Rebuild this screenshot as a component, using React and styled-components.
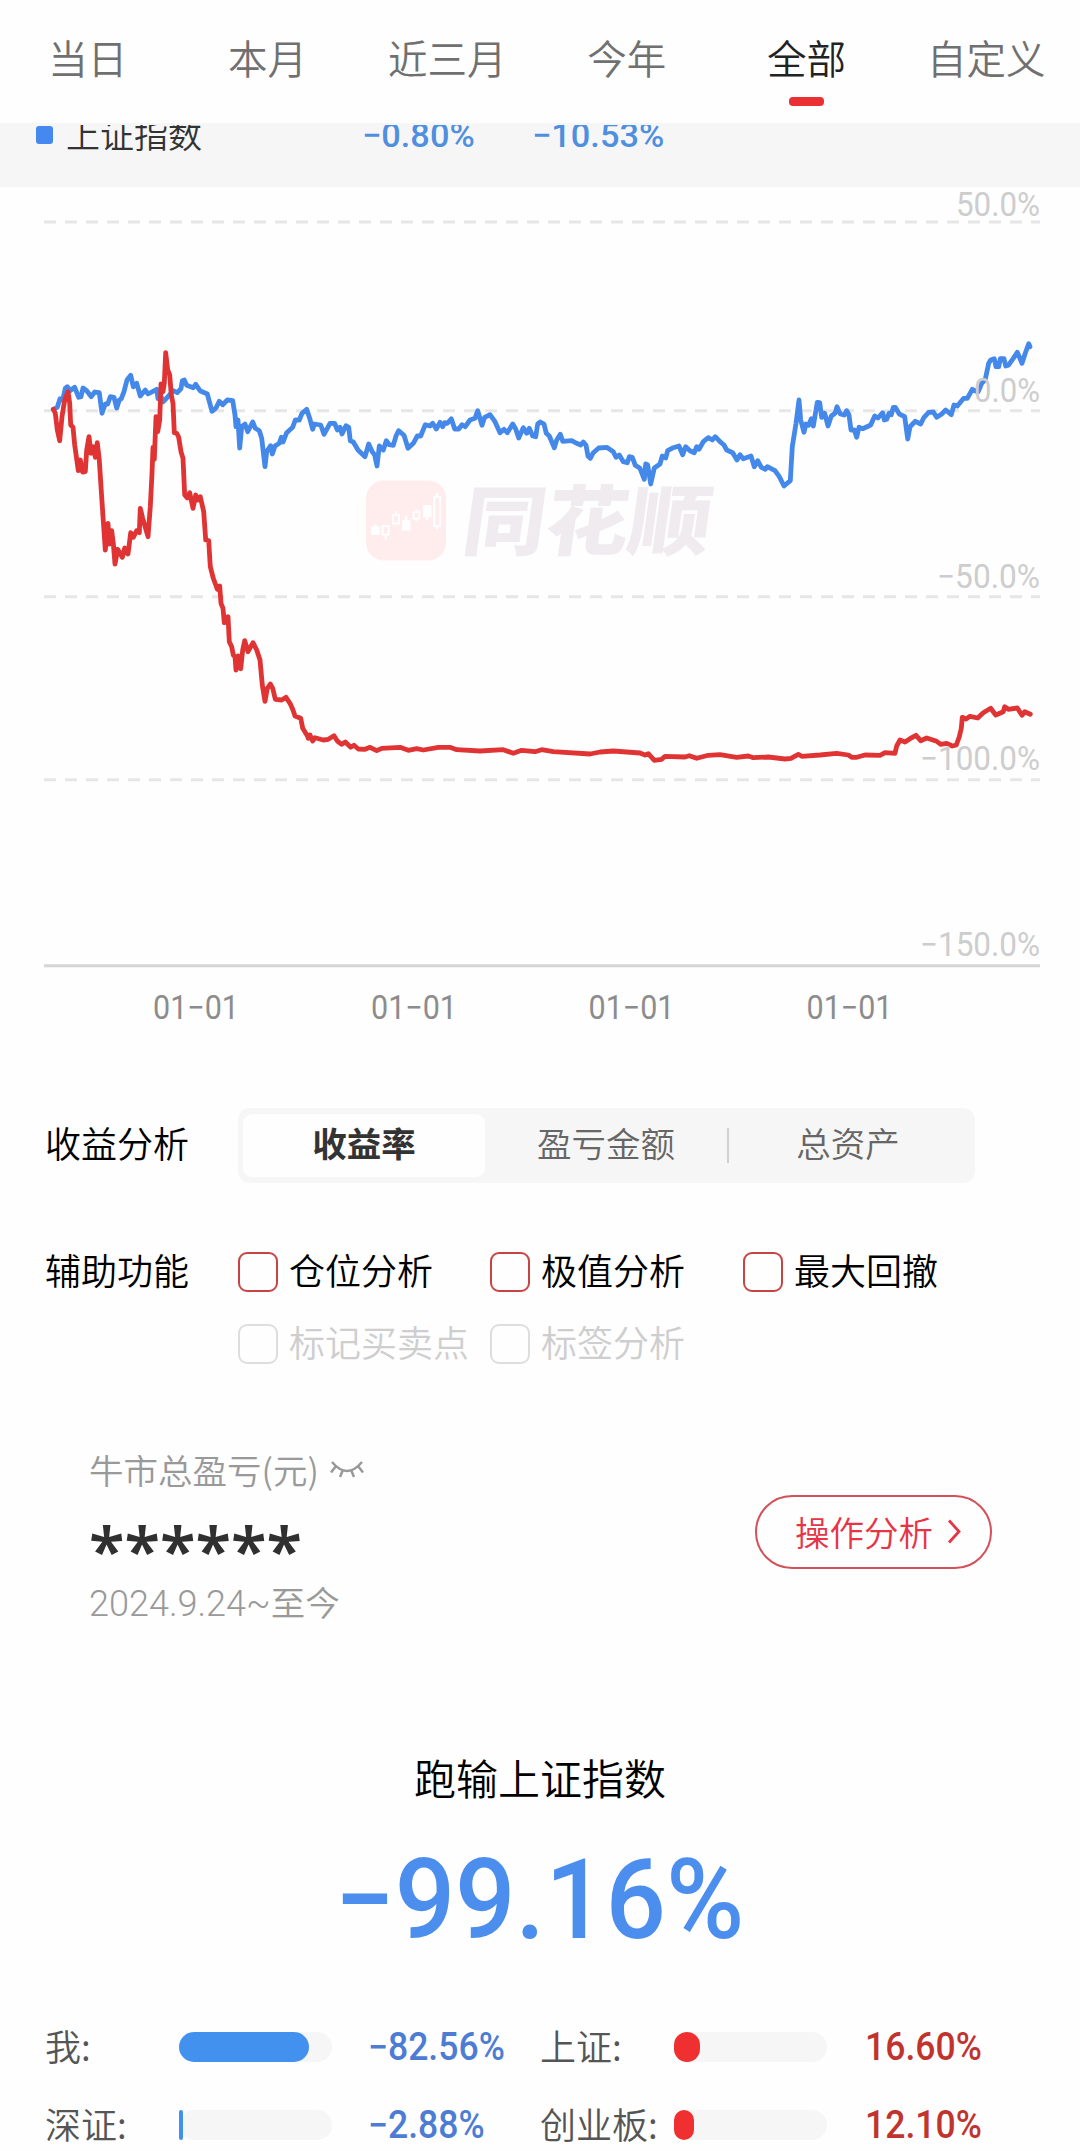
import React from "react";
import styled, { createGlobalStyle } from "styled-components";

const BLUE = "#4488ea";
const RED = "#e03434";

const GlobalStyle = createGlobalStyle`
  body {
    margin: 0;
    background: #fefefe;
    overflow: hidden;
  }
`;

const Page = styled.div`
  width: 1080px;
  height: 2151px;
  overflow: hidden;
  background: #fefefe;
  color: #000;
  font-family: "Noto Sans CJK SC", "Noto Sans", sans-serif;
  font-weight: 350;
  white-space: nowrap;
`;

const TabBar = styled.nav`
  display: grid;
  grid-template-columns: repeat(6, 1fr);
  width: 1078px;
  height: 123px;
  margin-left: -2px;
`;

const Tab = styled.div`
  display: flex;
  flex-direction: column;
  align-items: center;
  padding-top: 32px;
  font-size: 39.5px;
  line-height: 50px;
  color: ${props => (props.$active ? "#222" : "#707070")};
`;

const TabMark = styled.span`
  width: 35px;
  height: 9px;
  margin-top: 15px;
  border-radius: 4px;
  background: #eb3033;
`;

const LegendBar = styled.div`
  height: 62px;
  border-top: 2px solid #f6f6f7;
  background: #f6f6f7;
  overflow: hidden;
`;

const Legend = styled.div`
  display: grid;
  grid-template-columns: 30px 296px 170px auto;
  align-items: center;
  height: 40px;
  margin-top: -10px;
  padding-left: 36px;
  font-size: 34px;
  line-height: 40px;
  color: #333;
`;

const LegendSwatch = styled.span`
  width: 17px;
  height: 18px;
  border-radius: 3px;
  background: #4488f0;
`;

const LegendName = styled.span`
  margin-top: -3px;
`;

const Num = styled.span`
  display: inline-block;
  font-family: Roboto, sans-serif;
  font-weight: ${props => props.$weight || 400};
  font-size: ${props => props.$size}px;
  color: ${props => props.$color};
  transform: scaleX(${props => props.$stretch || 1});
  transform-origin: ${props => props.$origin || "left"};
`;

const ChartSvg = styled.svg`
  display: block;
  width: 1080px;
  height: 853px;
`;

const AxisText = styled.text`
  font-family: Roboto, sans-serif;
  font-weight: 400;
  font-size: 33px;
  fill: ${props => props.$color};
`;

const Brand = styled.text`
  font-family: "Noto Sans CJK SC", sans-serif;
  font-weight: 900;
  font-size: 76px;
  fill: #efebef;
`;

const Row = styled.div`
  display: flex;
  align-items: center;
  padding-left: 45px;
`;

const AnalysisRow = styled(Row)`
  margin-top: 68px;
  height: 75px;
`;

const RowLabel = styled.div`
  width: 193px;
  padding-bottom: 7px;
  font-size: 36px;
  line-height: 34px;
`;

const Segmented = styled.div`
  display: flex;
  align-items: center;
  box-sizing: border-box;
  width: 737px;
  height: 75px;
  padding-left: 5px;
  border-radius: 12px;
  background: #f6f6f6;
`;

const Segment = styled.div`
  display: flex;
  align-items: center;
  justify-content: center;
  box-sizing: border-box;
  width: 242px;
  height: 63px;
  padding-bottom: 7px;
  border-radius: 9px;
  font-size: 34.5px;
  font-weight: ${props => (props.$active ? 700 : 350)};
  color: ${props => (props.$active ? "#333" : "#666")};
  background: ${props => (props.$active ? "#fefefe" : "transparent")};
`;

const Divider = styled.span`
  width: 2px;
  height: 35px;
  margin: 0 -2px 0 0;
  background: #d0d0d0;
`;

const OptionsRow = styled(Row)`
  align-items: flex-start;
  margin-top: 69px;
`;

const Options = styled.div`
  display: grid;
  grid-template-columns: 252px 253px auto;
  row-gap: 32px;
`;

const Option = styled.div`
  display: flex;
  gap: 11px;
  height: 40px;
  font-size: 36px;
  line-height: 34px;
  color: ${props => (props.$disabled ? "#cecece" : "#000")};
`;

const CheckBox = styled.span`
  flex: none;
  box-sizing: border-box;
  width: 40px;
  height: 40px;
  border: 2px solid ${props => (props.$disabled ? "#dedede" : "#c84444")};
  border-radius: 9px;
`;

const ProfitCard = styled.section`
  display: flex;
  align-items: center;
  justify-content: space-between;
  margin-top: 85px;
  padding: 0 88px 0 89px;
  height: 176px;
`;

const ProfitInfo = styled.div`
  height: 176px;
  color: #999;
  font-size: 34.5px;
`;

const ProfitTitle = styled.div`
  display: flex;
  align-items: center;
  gap: 11px;
  height: 40px;
  line-height: 40px;
`;

const Masked = styled.div`
  height: 54px;
  margin-top: 28px;
  font-family: "Noto Sans", sans-serif;
  font-weight: 600;
  font-size: 65px;
  line-height: 64px;
  color: #303030;
`;

const ProfitDate = styled.div`
  margin-top: 10px;
  line-height: 40px;
`;

const PillButton = styled.button`
  display: flex;
  align-items: center;
  justify-content: center;
  gap: 14px;
  box-sizing: border-box;
  width: 237px;
  height: 74px;
  margin-top: -11px;
  padding: 0 0 2px 9px;
  border: 2px solid #d3505a;
  border-radius: 37px;
  background: transparent;
  font: inherit;
  font-size: 34.5px;
  color: #e73447;
`;

const Summary = styled.section`
  display: flex;
  flex-direction: column;
  align-items: center;
  margin-top: 127px;
`;

const SummaryTitle = styled.div`
  font-size: 42px;
  line-height: 50px;
`;

const SummaryValue = styled.div`
  margin-top: 33px;
  line-height: 130px;
`;

const Comparison = styled.div`
  display: grid;
  grid-template-columns: 495px auto;
  row-gap: 38px;
  margin-top: 31px;
  padding-left: 46px;
`;

const CompareItem = styled.div`
  display: grid;
  grid-template-columns: 133px ${props => (props.$wide ? "191px" : "189px")} auto;
  align-items: center;
  height: 40px;
  font-size: 36px;
  line-height: 40px;
  color: #555;
`;

const CompareLabel = styled.span`
  margin: -5px 0 0 -1px;
`;

const Track = styled.div`
  width: 153px;
  height: 30px;
  border-radius: 15px;
  background: #f6f6f6;
`;

const Fill = styled.div`
  height: 30px;
  border-radius: 15px;
  background: ${props => props.$color};
`;

const TABS = ["当日", "本月", "近三月", "今年", "全部", "自定义"];

const OPTIONS = [
  { label: "仓位分析" },
  { label: "极值分析" },
  { label: "最大回撤" },
  { label: "标记买卖点", disabled: true },
  { label: "标签分析", disabled: true }
];

const COMPARE = [
  { label: "我:", value: "−82.56%", width: 130, down: true },
  { label: "上证:", value: "16.60%", width: 26 },
  { label: "深证:", value: "−2.88%", width: 4, down: true },
  { label: "创业板:", value: "12.10%", width: 19.5 }
];

const Y_TICKS = [
  { label: "50.0%", line: 222, base: 215.5, width: 84 },
  { label: "0.0%", line: 410.7, base: 401.5, width: 66 },
  { label: "−50.0%", line: 596.8, base: 587.5, width: 103 },
  { label: "−100.0%", line: 779.7, base: 770, width: 120 },
  { label: "−150.0%", base: 956, width: 120 }
];

const X_TICKS = [153, 371, 588.5, 806.5];

const INDEX_LINE =
  "53.3,409.3 57.3,407.3 60,398.7 62.7,400 65.3,388.3 67.3,386.7 70,390.7 74.7,387.3 78.7,397.3 81,396.7 83,388 86.7,390.7 91.3,396.7 94.7,392 99.3,392.7 102,413.3 105.3,404 107.7,404 110.3,396.7 114,397.3 116.7,408 119.3,400 121.3,398.7 124,391.7 127,380 130.7,375.3 133.3,386.7 136.7,383.3 140.3,396 145.3,390 148,394 156.7,389.3 158,398.7 160.7,396 163.3,401.7 167.3,397.3 173.3,390.7 177.3,392.7 181,388.7 182.3,380.7 184.3,380 186.7,385.3 193.3,387.7 195.7,384.3 200,390.7 207.3,394 212,411.3 216,408 219.3,401.3 222.7,404.7 227.3,400 232.7,400.7 235,415 236,426.7 238,420 239.7,448 241.7,426.7 245,424 247.7,431.7 252.7,422 255.3,428.3 259.3,430.7 261.7,438.3 265,466.7 266.7,451.7 270.7,445.7 272.3,454 275,446 279.3,443.3 281.3,437.3 283,442 286.7,432.7 292.7,427.3 295.3,420 299.3,420 302,413.3 306.7,409.3 310,419.3 312.7,429.3 314.3,424 320.7,425 324,434.3 330,423.3 334.7,423.3 337.3,430 340,427.3 342,434 346,425.7 348.7,427.3 350.3,440.7 353.3,442 358,450 365,456.7 368.7,444 372,451.3 374.7,455 377,466 379.3,446 383.3,450 386.3,440.7 389.3,444.7 393.3,445.3 396,436 398.7,430.7 404,435.3 408,448.3 413.3,443.3 417.3,436 420.7,436 425.3,424.7 430,426 432.7,423.3 436.3,429 440,422.3 442.7,426.7 444.7,422.7 447.3,423.3 451.3,418.7 454.7,429 458.7,429 462,424.7 465.3,426.7 470,420 475,418.3 477.7,410.7 482,425.3 484.7,417.3 490,414.7 495,421.7 500,432.7 504,429.3 507.3,432.7 512.7,424 515.7,429 518.7,438 523.3,427.7 526.7,433.3 529.3,428.3 532.7,436 535.7,436.7 537.7,424 540.3,422 544,424 546.3,433.3 549.3,436 554.3,447.7 556.7,440 560.3,434.3 562.7,441.3 571.7,440.7 576.7,443.3 580.7,445 583.3,442 586,445.3 588,456 590.3,458.3 593.3,452.7 598.7,448 606.7,447.3 613.3,451.7 616,457.3 619.3,455 623.3,461.7 627.3,462.7 629.3,456.7 632.3,457.3 635.3,465.3 640,468.3 644.3,479.3 645.7,464 647.7,465 650.7,484 654.3,468 660,464 662.3,456 665.7,458 667.7,450.7 673.3,447.7 679,446 682.7,454.7 685.7,446.7 690,450.7 694.3,452.7 696.7,446.7 699,449.3 703.3,441.7 708.3,437.7 712.3,440 715.3,436.7 720,441.7 724,445 726.7,450 732.7,452.7 737,460 740,454.7 743.3,458.7 751,456 754.3,466.7 757.7,460.7 761.3,467.3 765.3,469.3 767.3,466.7 775,470.7 779.3,476.7 784,486 790.3,480.7 792.3,446.7 796,423.3 799,400 800.7,420 804,432.3 806,424 808.7,425.3 811.3,418.7 813.3,426 817.3,402.3 819.7,402.7 821.7,417.3 824.7,413.3 828,426 831.3,416 835,413.3 837,406.7 840.3,414 844.3,415 846.7,410.7 849,415 851,430 854.3,430 856.7,437.3 859,427.3 862.7,428.7 870.7,425 874.7,416 878,418 882.7,412.7 884.3,420 886.7,419.3 889,413.3 891.3,414.7 893.3,407.3 895.3,407.3 899.3,414 904.7,416.7 907.7,439 910,426.7 915.3,421.3 920.7,424 924,417.3 928.7,412.3 933.3,412 936.7,417.3 941.7,414 945.7,410 951.3,414.7 954,405 957.3,406 963.7,398.3 967.3,398.3 972.3,389.3 978,392 981.7,383.3 985.3,379.3 988.7,363.3 990.7,360 994.3,358.7 996,366.7 998.7,366.7 1000.3,358.7 1004,358.7 1005.7,366 1008.3,365.3 1013.3,358.3 1017.3,352.3 1022,363.3 1025,354 1028.7,343.7 1030,346.7";

const MY_LINE =
  "53.3,409.3 55.3,413.3 57.3,430 59.7,440.7 62,416.7 64.7,400 68,391.7 69.7,403.3 70.7,425 73,427.3 74.7,445 78.3,470.7 80.3,460 82.7,472 85.3,471.7 86.7,450 89,436.7 91,453.3 93.3,446.7 95.3,457.3 97.3,442.7 99.3,460 101,486.7 103,516.7 105.3,550 108,523.3 109.3,544 111.7,530.7 113.3,543.3 115,564 117.7,549.3 122.3,557.3 124.7,548 128,554 130.7,532.7 133.3,537.3 136.7,530.7 139.3,532.7 140.3,508.3 142.7,518.3 148,536.7 150.3,506.7 152,473.3 153,447.3 154.3,459.3 156,416.7 157.7,431.7 159.7,420 161,384 163,391.7 164.3,383.3 165.7,352.7 167.7,370 169.7,375 171.3,395 173,403.3 174.3,432.7 176.7,433.3 178.7,437.3 181,451.7 183,458.3 184.7,495 187.3,498 189.7,492.7 193,508.3 195.7,495 197.7,500 200.3,496.7 203.7,511.7 205.7,540 208.7,540.7 210.3,566.7 213.3,578.3 217.3,589.3 219.7,586 221,603.3 223,608.3 224.3,622.7 228,616.7 229.3,641.7 231.7,646.7 233.3,655 235,656.7 236,670 238,656 240.7,668.7 242.7,650 244.7,640.7 248,651.7 253,642.7 256.7,650 260,660 262.3,685 265,701.3 267.3,688.3 270.3,684 272.7,688.3 275.3,699.3 281.7,700 286,697.3 290,703.3 292.7,709.3 295,716 300.7,718.3 302.7,728.3 307.3,735.7 308.3,738.3 310,735 312.7,741 315,737.7 323.3,740 328.3,739.3 334,735.7 337.3,741 341.7,744.3 345.3,742 350.7,747.3 354,745.3 358.3,749 365,749.3 370,747.3 376.7,750.7 381.7,748.3 400,747.3 408.3,750.3 416.7,748.7 423.3,750 438.3,747.3 450,747.3 456.7,749.7 480,751 503.3,749.7 513.3,753.3 521.7,750.3 535,751.7 541.7,749.7 553.3,751.7 590,754 600,752 613.3,751 640,753 645,755 648.3,753.7 654.3,760.3 661.7,759.3 665,756.3 685,757 689.3,755.7 696.7,758.3 708.3,755.3 720,754.7 736.7,757.3 748.3,756 753.3,757.7 768.3,757 785,759 791,758.3 798.3,754.3 801.7,756.3 820,755 836.7,753.3 848.3,755 851.7,757.3 856.7,757.3 865,755 880,755.3 885,752.7 895,753.3 896.7,746 900,740 905,742 910,738.7 916,735.3 920.7,740.7 926.7,738 936.7,741.3 940.7,744.3 946.7,743.3 952.3,746 956.3,745 959.3,736.7 961.3,728.3 962.3,717.3 966,719 970,716.3 977.7,718 983.3,712.7 990.7,708.3 995.7,715 1003.3,711.7 1004.7,706.7 1008.3,709.3 1017.3,708 1022,715.3 1024.7,711.7 1030.3,714.3";

const Watermark = () => (
  <g>
    <rect x="366" y="480.5" width="80" height="80" rx="18" fill="#ffeded" />
    <g fill="#fefefe">
      <rect x="371" y="526.5" width="9" height="8.5" rx="1" />
      <rect x="374" y="525" width="3" height="3" />
      <rect x="402" y="520" width="8.5" height="10.5" rx="1" />
      <rect x="404.8" y="516" width="2.5" height="6" />
      <rect x="423" y="505" width="8.5" height="12.5" rx="1" />
      <rect x="425.8" y="515" width="2.5" height="5" />
    </g>
    <g fill="none" stroke="#fefefe" strokeWidth="2">
      <path d="M382.7 526h6v8.5h-6zM385.7 534.5v5M393 515h6v8.5h-6zM396 511v4M413.3 512h6v6.5h-6zM416.3 509.5v2.5M416.3 518.5v3" />
      <path d="M434.2 497h6v29h-6zM437.2 493v4M437.2 526v3" />
    </g>
    <Brand
      transform="translate(460 549) skewX(-8)"
      textLength="248"
      lengthAdjust="spacingAndGlyphs"
    >
      同花顺
    </Brand>
  </g>
);

const Chart = () => (
  <ChartSvg viewBox="0 187 1080 853">
    <Watermark />
    {Y_TICKS.filter(t => t.line).map(t => (
      <path
        key={t.label}
        d={`M44 ${t.line}H1040`}
        stroke="#e6e6e6"
        strokeWidth="3"
        strokeDasharray="12 9"
      />
    ))}
    <path d="M44 965.7H1040" stroke="#d5d5d5" strokeWidth="3" />
    <g fill="none" strokeWidth="4.8" strokeLinejoin="round" strokeLinecap="round">
      <polyline points={INDEX_LINE} stroke={BLUE} />
      <polyline points={MY_LINE} stroke={RED} />
    </g>
    {Y_TICKS.map(t => (
      <AxisText
        key={t.label}
        x={1040 - t.width}
        y={t.base}
        $color="#cdcdcd"
        textLength={t.width}
        lengthAdjust="spacingAndGlyphs"
      >
        {t.label}
      </AxisText>
    ))}
    {X_TICKS.map(x => (
      <AxisText
        key={x}
        x={x}
        y="1019"
        $color="#8c8c8c"
        textLength="86"
        lengthAdjust="spacingAndGlyphs"
      >
        01−01
      </AxisText>
    ))}
  </ChartSvg>
);

const ClosedEye = () => (
  <svg width="36" height="20" viewBox="0 0 36 20" fill="none" stroke="#999" strokeWidth="2.5">
    <path d="M2 3Q17 21 32 3M6 7L1 13.5M28 7L33 13.5M12.5 12L10 18M21.5 12L24 18" />
  </svg>
);

const Chevron = () => (
  <svg width="14" height="26" viewBox="0 0 14 26" fill="none" stroke="#e73447" strokeWidth="2.8">
    <path d="M2 2.5L12 13.5L2 24.5" />
  </svg>
);

const App = () => (
  <Page>
    <GlobalStyle />
    <TabBar>
      {TABS.map(tab => (
        <Tab key={tab} $active={tab === "全部"}>
          {tab}
          {tab === "全部" && <TabMark />}
        </Tab>
      ))}
    </TabBar>
    <LegendBar>
      <Legend>
        <LegendSwatch />
        <LegendName>上证指数</LegendName>
        <Num $size={34} $color="#4f8fdf" $weight={500} $stretch={1.01}>−0.80%</Num>
        <Num $size={34} $color="#4f8fdf" $weight={500} $stretch={1.01}>−10.53%</Num>
      </Legend>
    </LegendBar>
    <Chart />
    <AnalysisRow>
      <RowLabel>收益分析</RowLabel>
      <Segmented>
        <Segment $active>收益率</Segment>
        <Segment>盈亏金额</Segment>
        <Divider />
        <Segment>总资产</Segment>
      </Segmented>
    </AnalysisRow>
    <OptionsRow>
      <RowLabel>辅助功能</RowLabel>
      <Options>
        {OPTIONS.map(({ label, disabled }) => (
          <Option key={label} $disabled={disabled}>
            <CheckBox $disabled={disabled} />
            {label}
          </Option>
        ))}
      </Options>
    </OptionsRow>
    <ProfitCard>
      <ProfitInfo>
        <ProfitTitle>
          牛市总盈亏(元)
          <ClosedEye />
        </ProfitTitle>
        <Masked>******</Masked>
        <ProfitDate>
          <Num $size={36} $color="#999" $weight={350}>2024.9.24~</Num>至今
        </ProfitDate>
      </ProfitInfo>
      <PillButton>
        操作分析
        <Chevron />
      </PillButton>
    </ProfitCard>
    <Summary>
      <SummaryTitle>跑输上证指数</SummaryTitle>
      <SummaryValue>
        <Num $size={112} $color="#4b8eee" $weight={500} $origin="center" $stretch={0.95}>
          −99.16%
        </Num>
      </SummaryValue>
    </Summary>
    <Comparison>
      {COMPARE.map(({ label, value, width, down }) => (
        <CompareItem key={label} $wide={!down}>
          <CompareLabel>{label}</CompareLabel>
          <Track>
            <Fill $color={down ? "#4391ee" : "#ef2f30"} style={{ width }} />
          </Track>
          <Num $size={38} $color={down ? "#4c7cd4" : "#c1342e"} $weight={500} $stretch={0.935}>
            {value}
          </Num>
        </CompareItem>
      ))}
    </Comparison>
  </Page>
);

export default App;
